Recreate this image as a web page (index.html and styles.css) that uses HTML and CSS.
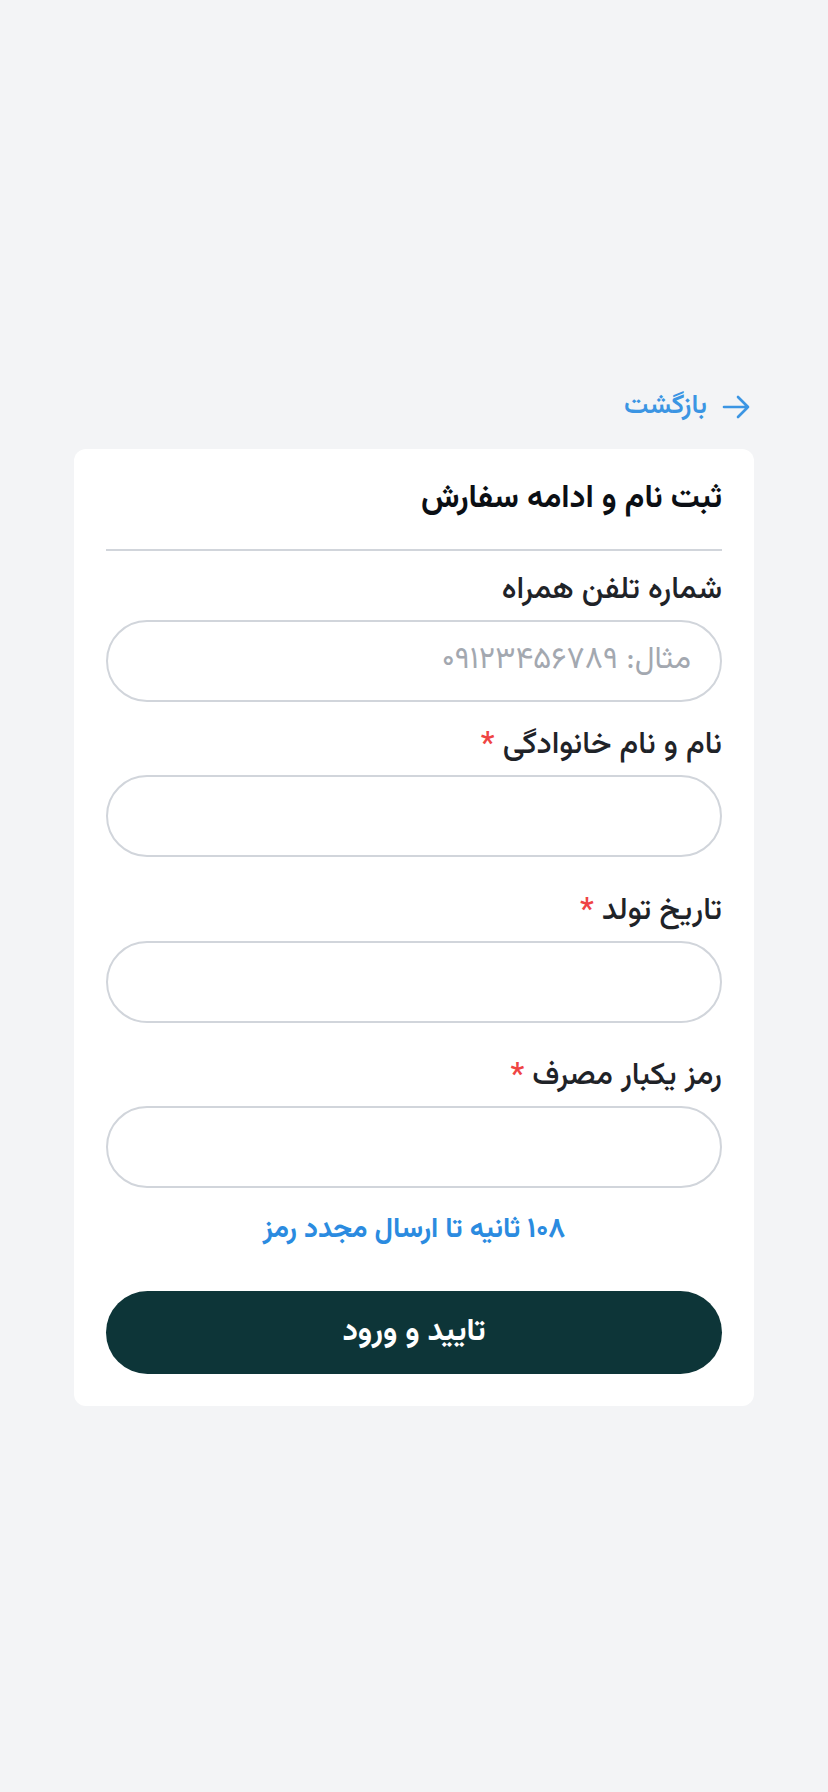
FILE: index.html
```html
<!DOCTYPE html>
<html lang="fa" dir="rtl">
<head>
<meta charset="utf-8">
<title>ثبت نام و ادامه سفارش</title>
<link rel="stylesheet" href="styles.css">
</head>
<body>
<main class="page">
  <div class="wrap">
    <a class="back" href="#">
      <svg class="back-icon" viewBox="0 0 24 24" fill="none" stroke="currentColor" stroke-width="2" stroke-linecap="round" stroke-linejoin="round"><path d="M13.5 4.5L21 12l-7.5 7.5M21 12H3"/></svg>
      <span>بازگشت</span>
    </a>
    <section class="card">
      <h1 class="title">ثبت نام و ادامه سفارش</h1>
      <div class="field f1">
        <label class="label">شماره تلفن همراه</label>
        <input class="input" type="text" placeholder="مثال: ۰۹۱۲۳۴۵۶۷۸۹">
      </div>
      <div class="field f2">
        <label class="label">نام و نام خانوادگی <span class="req">*</span></label>
        <input class="input" type="text">
      </div>
      <div class="field f3">
        <label class="label">تاریخ تولد <span class="req">*</span></label>
        <input class="input" type="text">
      </div>
      <div class="field f4">
        <label class="label">رمز یکبار مصرف <span class="req">*</span></label>
        <input class="input" type="text">
      </div>
      <p class="resend">۱۰۸ ثانیه تا ارسال مجدد رمز</p>
      <button class="submit" type="button">تایید و ورود</button>
    </section>
  </div>
</main>
</body>
</html>
```

FILE: styles.css
```css
* { box-sizing: border-box; }
html, body { margin: 0; padding: 0; }
body {
  background: #f3f4f6;
  font-family: "Vazirmatn", "Noto Sans Arabic", "DejaVu Sans", sans-serif;
  color: #111827;
}
.page {
  min-height: 1792px;
  display: flex;
  flex-direction: column;
  justify-content: center;
  align-items: center;
}
.wrap {
  width: 680px;
  display: flex;
  flex-direction: column;
}
.back {
  height: 40px;
  display: flex;
  align-items: center;
  gap: 13px;
  padding-right: 6px;
  color: #3b95e3;
  text-decoration: none;
  font-size: 27px;
  line-height: 40px;
  font-weight: 600;
  margin-bottom: 22px;
}
.back-icon { width: 32px; height: 32px; margin-right: -4px; flex: none; }
.card {
  background: #fff;
  border-radius: 12px;
  padding: 32px;
}
.title {
  margin: 0;
  font-size: 32px;
  line-height: 36px;
  font-weight: 700;
  color: #0b0f14;
  padding-bottom: 32px;
  border-bottom: 2px solid #d1d5db;
}
.field { display: flex; flex-direction: column; }
.f1 { margin-top: 24px; }
.f2 { margin-top: 28px; }
.f3 { margin-top: 39px; }
.f4 { margin-top: 38px; }
.label {
  font-size: 31px;
  line-height: 32px;
  font-weight: 500;
  color: #1f2328;
  margin-bottom: 13px;
}
.req { color: #ef4444; }
.input {
  height: 82px;
  width: 100%;
  border: 2px solid #d1d5db;
  border-radius: 9999px;
  padding: 0 29px;
  font-family: inherit;
  font-size: 31px;
  color: #111827;
  background: #fff;
  outline: none;
  direction: rtl;
}
.input::placeholder { color: #a3a8b0; }
.resend {
  margin: 26px 0 0;
  text-align: center;
  font-size: 28px;
  line-height: 32px;
  font-weight: 700;
  color: #2b8be0;
}
.submit {
  margin-top: 45px;
  height: 83px;
  width: 100%;
  border: none;
  border-radius: 9999px;
  background: #0d3538;
  color: #fff;
  font-family: inherit;
  font-size: 31px;
  font-weight: 700;
}
```
